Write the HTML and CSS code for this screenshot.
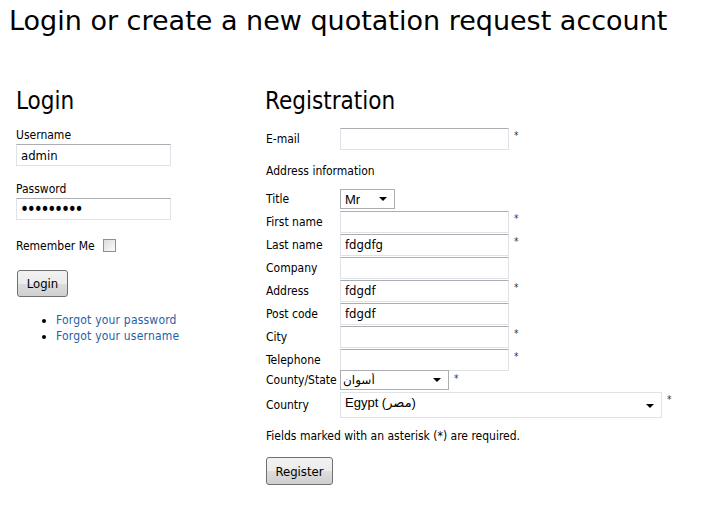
FILE: index.html
```html
<!DOCTYPE html>
<html>
<head>
<meta charset="utf-8">
<link rel="stylesheet" href="styles.css">
</head>
<body>
<h1 class="title">Login or create a new quotation request account</h1>
<div class="columns">
  <div class="login">
    <h2 class="sub">Login</h2>
    <label class="lbl">Username</label>
    <input class="txt login-txt" type="text" value="admin">
    <label class="lbl pw">Password</label>
    <input class="txt login-txt" type="password" value="123456789">
    <div class="remember"><span>Remember Me</span><span class="check"></span></div>
    <button class="btn login-btn">Login</button>
    <ul class="links">
      <li><a href="#">Forgot your password</a></li>
      <li><a href="#">Forgot your username</a></li>
    </ul>
  </div>
  <div class="register">
    <h2 class="sub">Registration</h2>
    <div class="row email-row"><span class="rl">E-mail</span><input class="txt reg" type="text"><span class="star">*</span></div>
    <div class="section">Address information</div>
    <div class="row row-title"><span class="rl">Title</span><span class="sel sel-title"><select><option>Mr</option></select><i class="arrow"></i></span></div>
    <div class="row"><span class="rl">First name</span><input class="txt reg" type="text"><span class="star">*</span></div>
    <div class="row"><span class="rl">Last name</span><input class="txt reg" type="text" value="fdgdfg"><span class="star">*</span></div>
    <div class="row"><span class="rl">Company</span><input class="txt reg" type="text"></div>
    <div class="row"><span class="rl">Address</span><input class="txt reg" type="text" value="fdgdf"><span class="star">*</span></div>
    <div class="row"><span class="rl">Post code</span><input class="txt reg" type="text" value="fdgdf"></div>
    <div class="row"><span class="rl">City</span><input class="txt reg" type="text"><span class="star">*</span></div>
    <div class="row"><span class="rl">Telephone</span><input class="txt reg" type="text"><span class="star">*</span></div>
    <div class="row row-state"><span class="rl">County/State</span><span class="sel sel-state"><select><option>أسوان</option></select><i class="arrow"></i></span><span class="star">*</span></div>
    <div class="row row-country"><span class="rl">Country</span><span class="sel sel-country"><select><option>Egypt (مصر)</option></select><i class="arrow"></i></span><span class="star">*</span></div>
    <p class="note">Fields marked with an asterisk (*) are required.</p>
    <button class="btn reg-btn">Register</button>
  </div>
</div>
</body>
</html>
```
FILE: styles.css
```css
html, body {
  margin: 0;
  padding: 0;
  background: #fff;
}
body {
  font-family: "DejaVu Sans Condensed", "DejaVu Sans", sans-serif;
  font-size: 12px;
  color: #000;
}
.title {
  margin: 0;
  padding: 2px 0 0 9px;
  font-family: "DejaVu Sans", sans-serif;
  font-weight: normal;
  font-size: 27px;
  line-height: 38px;
}
.columns {
  display: flex;
  padding-top: 46px;
}
.login {
  width: 249px;
  padding-left: 16px;
  display: flex;
  flex-direction: column;
  align-items: flex-start;
}
.register {
  display: flex;
  flex-direction: column;
  align-items: flex-start;
}
.sub {
  margin: 0;
  font-weight: normal;
  font-size: 24px;
  line-height: 30px;
  margin-bottom: 10px;
}
.login .sub { margin-bottom: 12px; }
.lbl {
  display: block;
  line-height: 15px;
  margin-bottom: 1px;
}
.lbl.pw { margin-top: 16px; }
.txt {
  box-sizing: border-box;
  height: 22px;
  border: 1px solid #dfe3e8;
  border-top-color: #abadb3;
  background: #fff;
  padding: 0 4px;
  margin: 0;
  font-family: "DejaVu Sans Condensed", "DejaVu Sans", sans-serif;
  font-size: 13px;
  color: #000;
  outline: none;
}
.login-txt {
  width: 155px;
}
.login-txt[type="password"] {
  font-size: 17px;
  letter-spacing: -2.2px;
  padding-left: 3px;
}
.remember {
  display: flex;
  align-items: center;
  margin-top: 19px;
  line-height: 15px;
}
.check {
  display: inline-block;
  width: 11px;
  height: 11px;
  margin-left: 8px;
  border: 1px solid #8f8f8f;
  background: linear-gradient(135deg, #dcdcdc, #fbfbfb);
  margin-top: -3px;
}
.btn {
  box-sizing: border-box;
  border: 1px solid #707070;
  border-radius: 3px;
  background: linear-gradient(#f2f2f2 0%, #ebebeb 50%, #dddddd 51%, #cfcfcf 100%);
  font-family: "DejaVu Sans Condensed", "DejaVu Sans", sans-serif;
  font-size: 13px;
  color: #000;
  padding: 0;
  margin: 0;
}
.login-btn {
  width: 51px;
  height: 27px;
  margin-top: 16px;
  margin-left: 1px;
}
.links {
  margin: 15px 0 0 0;
  padding-left: 40px;
  line-height: 16px;
}
.links li { font-size: 12px; }
.links a {
  color: #1e62a6;
  text-decoration: none;
  letter-spacing: 0.2px;
}
.row {
  display: flex;
  align-items: center;
  height: 23px;
  padding-left: 1px;
}
.rl {
  width: 74px;
  flex: none;
}
.reg {
  width: 169px;
}
.star {
  margin-left: 5px;
  font-size: 10px;
  color: #333;
  align-self: flex-start;
  margin-top: 3px;
}
.email-row {
  margin-top: 1px;
}
.section {
  padding-left: 1px;
  line-height: 15px;
  margin-top: 14px;
  margin-bottom: 10px;
}
.row-title {
  height: 20px;
  margin-bottom: 1px;
  align-items: center;
}
.sel {
  position: relative;
  display: inline-block;
}
.sel select {
  -webkit-appearance: none;
  appearance: none;
  box-sizing: border-box;
  border: 1px solid #abadb3;
  border-right-color: #dfe3e8;
  border-bottom-color: #dfe3e8;
  background: #fff;
  font-family: "Liberation Sans", "DejaVu Sans", sans-serif;
  font-size: 13px;
  color: #000;
  padding: 0 0 0 4px;
  margin: 0;
  outline: none;
  display: block;
}
.sel-title select {
  width: 55px;
  height: 20px;
  border: 1px solid #abadb3;
}
.sel-state select {
  width: 109px;
  height: 20px;
  font-family: "DejaVu Sans", sans-serif;
  font-size: 12px;
  padding-left: 2px;
  border-color: #abadb3;
}
.sel-country select {
  width: 322px;
  height: 26px;
  padding-top: 0;
  padding-bottom: 6px;
  border-color: #dfe3e8;
  font-family: "Liberation Sans", "DejaVu Sans", sans-serif;
}
.arrow {
  position: absolute;
  right: 8px;
  top: 50%;
  margin-top: -2px;
  width: 0;
  height: 0;
  border-left: 4px solid transparent;
  border-right: 4px solid transparent;
  border-top: 4px solid #000;
}
.sel-country .arrow {
  top: 12px;
  margin-top: 0;
}
.row-state {
  height: 20px;
  margin-top: -1px;
  align-items: center;
}
.row-country {
  height: 26px;
  margin-top: 2px;
}
.row-country .star { margin-top: 2px; }
.row-state .star { align-self: center; margin-top: -4px; margin-left: 5px; }
.note {
  margin: 11px 0 0 0;
  padding-left: 1px;
  line-height: 15px;
}
.reg-btn {
  width: 67px;
  height: 28px;
  margin-top: 13px;
  margin-left: 1px;
}
```
